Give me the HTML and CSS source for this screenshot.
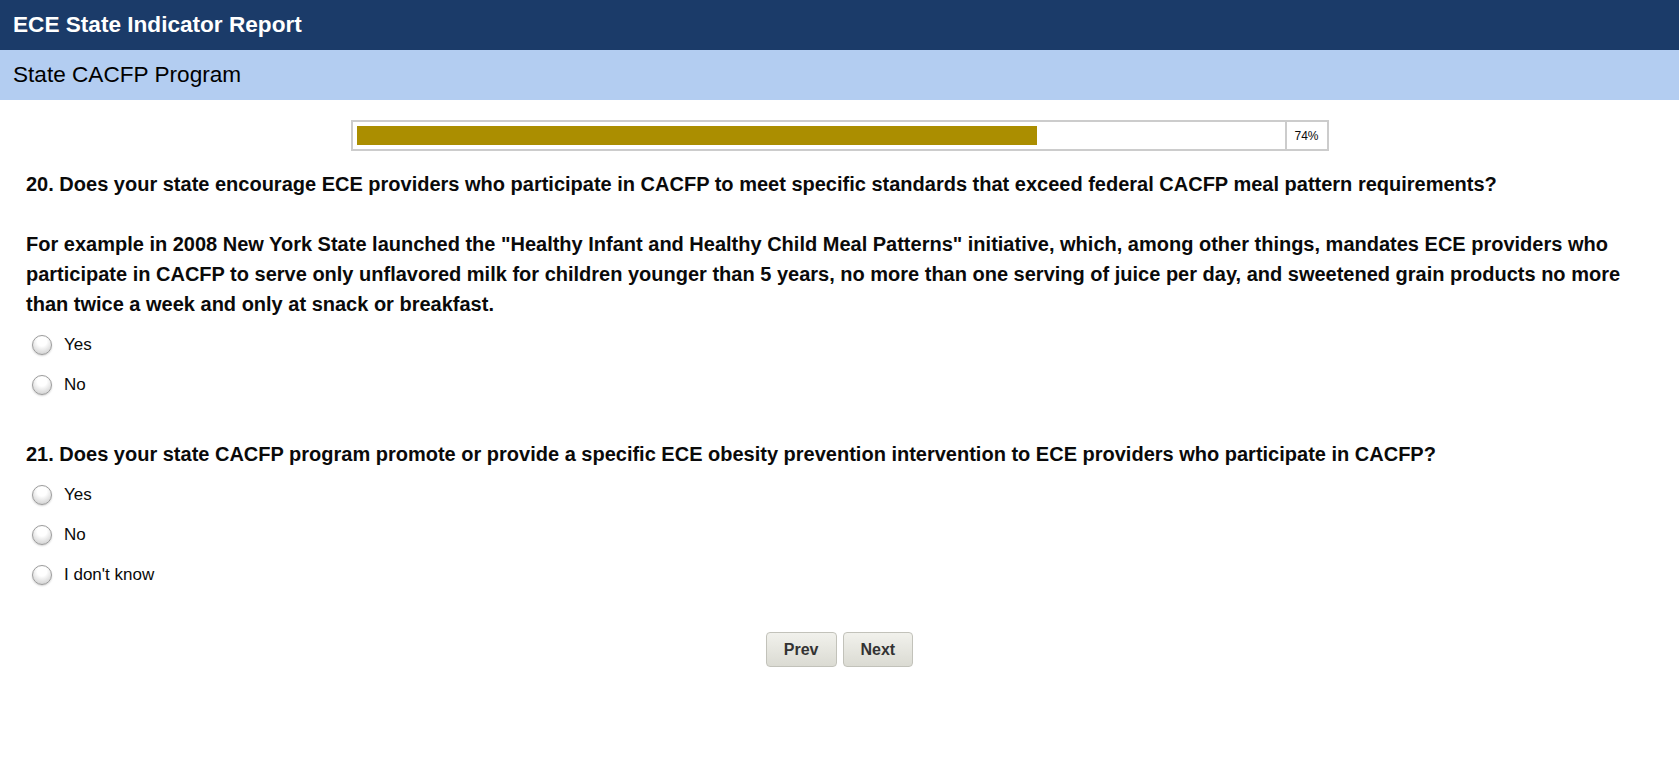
FILE: index.html
```html
<!DOCTYPE html>
<html lang="en">
<head>
  <meta charset="UTF-8" />
  <meta name="viewport" content="width=device-width, initial-scale=1.0"/>
  <title>ECE State Indicator Report</title>
  <link rel="stylesheet" href="styles.css">
</head>
<body>
  <header>
    <h1>ECE State Indicator Report</h1>
  </header>
  <div class="section-bar">State CACFP Program</div>

  <div class="progress">
    <div class="progress-track">
      <div class="progress-fill" style="width: 74%"></div>
    </div>
    <div class="progress-pct">74%</div>
  </div>

  <form class="survey">
    <div class="question">
      <p class="question-text">20. Does your state encourage ECE providers who participate in CACFP to meet specific standards that exceed federal CACFP meal pattern requirements?<br><br>For example in 2008 New York State launched the "Healthy Infant and Healthy Child Meal Patterns" initiative, which, among other things, mandates ECE providers who participate in CACFP to serve only unflavored milk for children younger than 5 years, no more than one serving of juice per day, and sweetened grain products no more than twice a week and only at snack or breakfast.</p>
      <div class="options">
        <label class="option"><input type="radio" name="q20" value="yes"> Yes</label>
        <label class="option"><input type="radio" name="q20" value="no"> No</label>
      </div>
    </div>

    <div class="question q21">
      <p class="question-text">21. Does your state CACFP program promote or provide a specific ECE obesity prevention intervention to ECE providers who participate in CACFP?</p>
      <div class="options">
        <label class="option"><input type="radio" name="q21" value="yes"> Yes</label>
        <label class="option"><input type="radio" name="q21" value="no"> No</label>
        <label class="option"><input type="radio" name="q21" value="dk"> I don't know</label>
      </div>
    </div>

    <div class="nav-buttons">
      <button type="button">Prev</button>
      <button type="button">Next</button>
    </div>
  </form>
</body>
</html>
```

FILE: styles.css
```css
body {
  font-family: "Liberation Sans", Arial, sans-serif;
  margin: 0;
  padding: 0;
  background: #fff;
  color: #0a0a0a;
}

header {
  background-color: #1b3b69;
  height: 50px;
  display: flex;
  align-items: center;
  padding: 0 13px;
}

header h1 {
  margin: 0;
  color: #fff;
  font-size: 22.6px;
  font-weight: bold;
}

.section-bar {
  background-color: #b3cdf1;
  height: 50px;
  display: flex;
  align-items: center;
  padding: 0 13px;
  font-size: 22.6px;
  color: #000;
}

.progress {
  width: 974px;
  margin: 20px auto 0;
  border: 2px solid #cccccc;
  display: flex;
}

.progress-track {
  flex: 1;
  padding: 4px 8px 4px 4px;
}

.progress-fill {
  height: 19px;
  background-color: #ab8e00;
}

.progress-pct {
  width: 40px;
  border-left: 2px solid #cccccc;
  font-size: 12px;
  display: flex;
  align-items: center;
  justify-content: center;
}

.survey {
  padding: 0 26px;
}

.question {
  margin-top: 18px;
}

.question.q21 {
  margin-top: 34px;
}

.question-text {
  margin: 0;
  font-size: 20px;
  font-weight: bold;
  line-height: 30px;
}

.options {
  margin-top: 6px;
  padding-left: 6px;
}

.option {
  display: flex;
  align-items: center;
  gap: 12px;
  height: 40px;
  font-size: 17px;
}

.option input {
  appearance: none;
  -webkit-appearance: none;
  width: 20px;
  height: 20px;
  margin: 0;
  border-radius: 50%;
  border: 1px solid #9c9c9c;
  background: radial-gradient(circle at 50% 30%, #ffffff 30%, #e2e2e2 65%, #c4c4c4 100%);
  box-shadow: 0 1px 2px rgba(0, 0, 0, 0.18);
}

.option input:checked {
  background: radial-gradient(circle, #3a3a3a 28%, #ffffff 35%, #e2e2e2 70%, #c4c4c4 100%);
}

.nav-buttons {
  display: flex;
  justify-content: center;
  gap: 6px;
  margin-top: 37px;
}

.nav-buttons button {
  height: 35px;
  padding: 0 17px;
  font-family: inherit;
  font-size: 16px;
  font-weight: bold;
  color: #333;
  border: 1px solid #c2c2ba;
  border-radius: 4px;
  background: linear-gradient(to bottom, #f1f1ec, #dbdbd3);
  cursor: pointer;
}

.nav-buttons button:hover {
  background: linear-gradient(to bottom, #e8e8e2, #cfcfc6);
}
```
